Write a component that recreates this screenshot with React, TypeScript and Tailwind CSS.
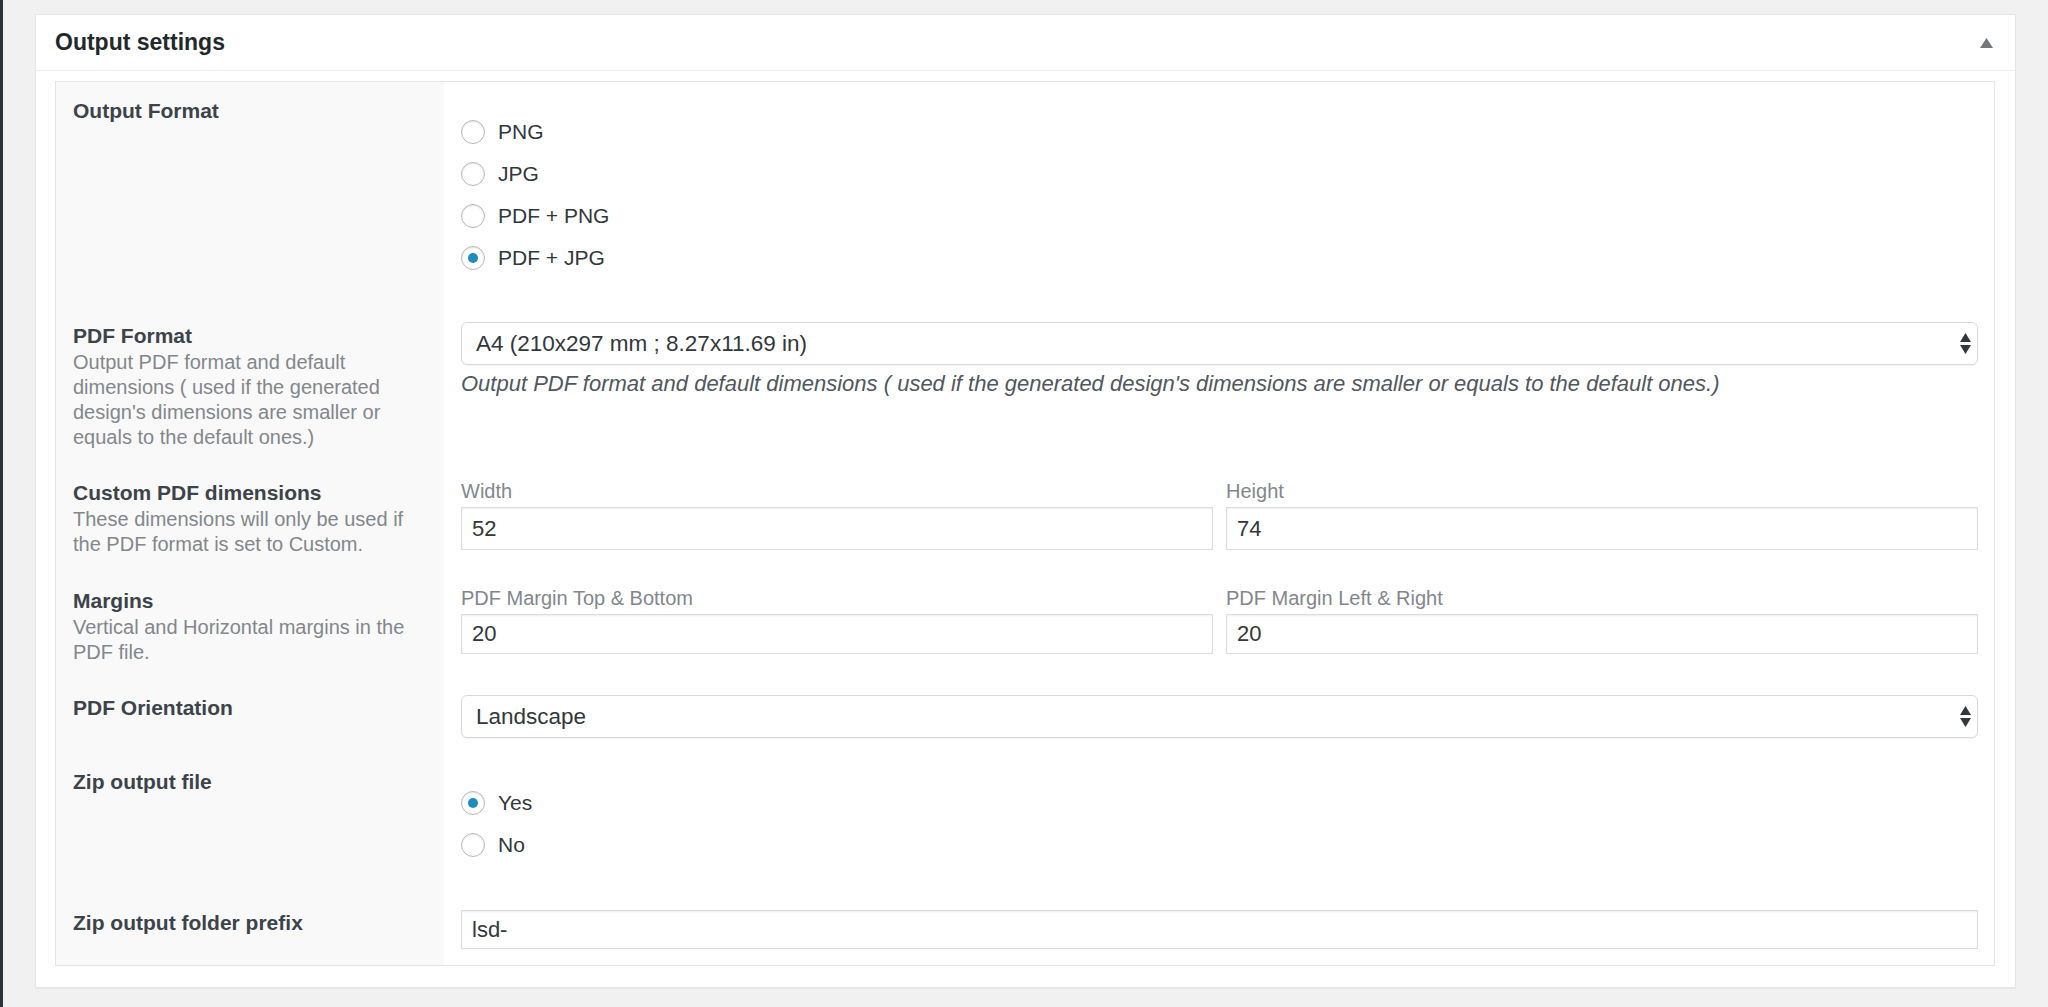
const Radio = ({ label, checked }: { label: string; checked?: boolean }) => (
  <div className="flex h-[42px] items-center gap-[13px]">
    <span className="flex h-[24px] w-[24px] items-center justify-center rounded-full border border-[#b4b9be] bg-white shadow-[inset_0_1px_2px_rgba(0,0,0,0.1)]">
      {checked && <span className="h-[10px] w-[10px] rounded-full bg-[#1e8cbe]" />}
    </span>
    <span className="text-[21px] text-[#32373c]">{label}</span>
  </div>
);

const SelectBox = ({ value }: { value: string }) => (
  <div className="flex h-[43px] items-center justify-between rounded-[6px] border border-[#d9d9d9] bg-white pl-[14px] pr-[6px] shadow-[0_1px_1px_rgba(0,0,0,0.04)]">
    <span className="text-[22.5px] text-[#32373c]">{value}</span>
    <svg width="11" height="21" viewBox="0 0 11 21" className="text-[#32373c]">
      <polygon points="5.5,0 11,9 0,9" fill="currentColor" />
      <polygon points="0,12 11,12 5.5,21" fill="currentColor" />
    </svg>
  </div>
);

const TextBox = ({ value, h }: { value: string; h: string }) => (
  <input
    readOnly
    value={value}
    className={`w-full border border-[#dddddd] bg-white pl-[10px] text-[22px] text-[#32373c] shadow-[inset_0_1px_2px_rgba(0,0,0,0.07)] outline-none ${h}`}
  />
);

const Row = ({
  label,
  desc,
  th,
  td,
  children,
}: {
  label: string;
  desc?: string;
  th: string;
  td: string;
  children?: React.ReactNode;
}) => (
  <div className="flex">
    <div className={`w-[388px] shrink-0 bg-[#f9f9f9] pl-[17px] pr-[26px] ${th}`}>
      <div className="text-[21px] font-bold leading-[28px] text-[#3c434a]">{label}</div>
      {desc && <div className="text-[20px] leading-[25px] text-[#82878c]">{desc}</div>}
    </div>
    <div className={`flex-1 bg-white pl-[17px] pr-[16px] ${td}`}>{children}</div>
  </div>
);

const FieldLabel = ({ children }: { children: React.ReactNode }) => (
  <div className="text-[20px] leading-[24px] text-[#82878c]">{children}</div>
);

export default function App() {
  return (
    <div className="flex min-h-screen bg-[#f1f1f1] font-['Liberation_Sans',Arial,sans-serif]">
      <div className="w-[3px] shrink-0 bg-[#2c3338]" />
      <div className="flex-1 pl-[32px] pr-[32px] pt-[14px]">
        <div className="border border-[#e5e5e5] bg-white pb-[21px] shadow-[0_1px_1px_rgba(0,0,0,0.04)]">
          <div className="flex h-[56px] items-center justify-between border-b border-[#eeeeee] pl-[19px] pr-[22px]">
            <h2 className="text-[23px] font-bold text-[#23282d]">Output settings</h2>
            <svg width="13" height="10" viewBox="0 0 13 10">
              <polygon points="6.5,0 13,10 0,10" fill="#72777c" />
            </svg>
          </div>
          <div className="ml-[19px] mr-[20px] mt-[10px] border border-[#e5e5e5]">
            <Row label="Output Format" th="pt-[15px]" td="pt-[29px] pb-[20px]">
              <Radio label="PNG" />
              <Radio label="JPG" />
              <Radio label="PDF + PNG" />
              <Radio label="PDF + JPG" checked />
            </Row>
            <Row
              label="PDF Format"
              desc="Output PDF format and default dimensions ( used if the generated design's dimensions are smaller or equals to the default ones.)"
              th="pt-[23px] pb-[6px]"
              td="pt-[23px]"
            >
              <SelectBox value="A4 (210x297 mm ; 8.27x11.69 in)" />
              <p className="mt-[6px] text-[22px] italic leading-[25px] text-[#50575e]">
                Output PDF format and default dimensions ( used if the generated design's dimensions are smaller or
                equals to the default ones.)
              </p>
            </Row>
            <Row
              label="Custom PDF dimensions"
              desc="These dimensions will only be used if the PDF format is set to Custom."
              th="pt-[23px] pb-[7px]"
              td="pt-[23px]"
            >
              <div className="flex gap-[13px]">
                <div className="flex-1">
                  <FieldLabel>Width</FieldLabel>
                  <div className="mt-[4px]">
                    <TextBox value="52" h="h-[43px]" />
                  </div>
                </div>
                <div className="flex-1">
                  <FieldLabel>Height</FieldLabel>
                  <div className="mt-[4px]">
                    <TextBox value="74" h="h-[43px]" />
                  </div>
                </div>
              </div>
            </Row>
            <Row
              label="Margins"
              desc="Vertical and Horizontal margins in the PDF file."
              th="pt-[23px] pb-[6px]"
              td="pt-[22px]"
            >
              <div className="flex gap-[13px]">
                <div className="flex-1">
                  <FieldLabel>PDF Margin Top &amp; Bottom</FieldLabel>
                  <div className="mt-[4px]">
                    <TextBox value="20" h="h-[40px]" />
                  </div>
                </div>
                <div className="flex-1">
                  <FieldLabel>PDF Margin Left &amp; Right</FieldLabel>
                  <div className="mt-[4px]">
                    <TextBox value="20" h="h-[40px]" />
                  </div>
                </div>
              </div>
            </Row>
            <Row label="PDF Orientation" th="pt-[23px]" td="pt-[24px] pb-[8px]">
              <SelectBox value="Landscape" />
            </Row>
            <Row label="Zip output file" th="pt-[22px]" td="pt-[36px] pb-[21px]">
              <Radio label="Yes" checked />
              <Radio label="No" />
            </Row>
            <Row label="Zip output folder prefix" th="pt-[22px]" td="pt-[23px] pb-[16px]">
              <TextBox value="lsd-" h="h-[39px]" />
            </Row>
          </div>
        </div>
      </div>
    </div>
  );
}
